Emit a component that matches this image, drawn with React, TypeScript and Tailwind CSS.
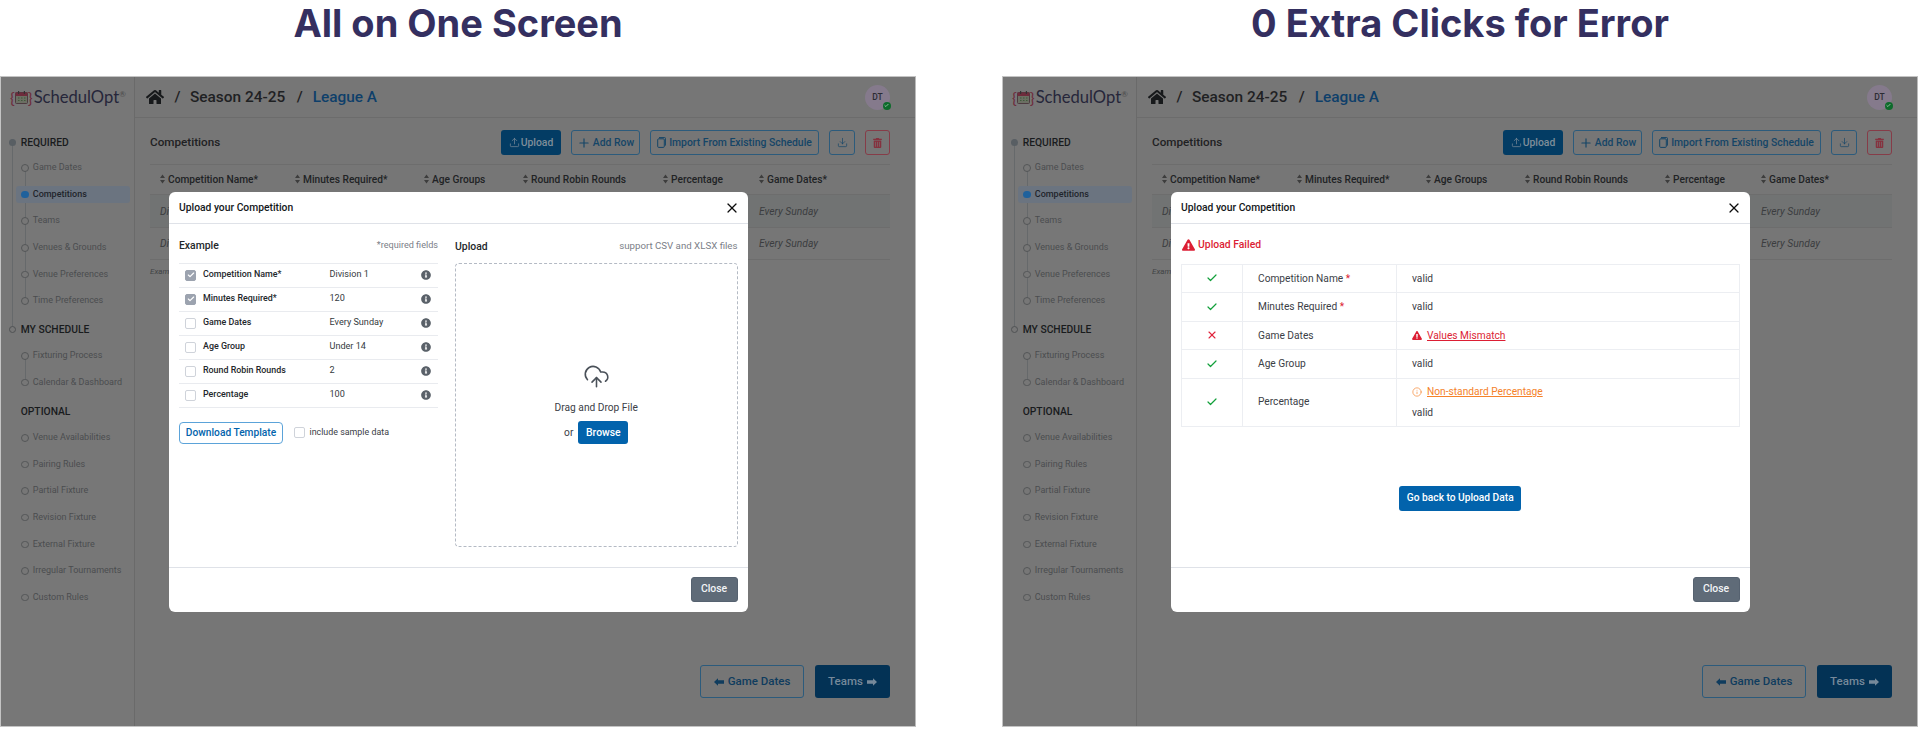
import React from "react";
import { FaHome, FaInfoCircle, FaTrashAlt, FaExclamationTriangle } from "react-icons/fa";
import { Upload, Download, Plus, X, Check, Info, CloudUpload } from "lucide-react";

const Sort = () => (
  <svg width="5" height="10" viewBox="0 0 5 10" className="shrink-0">
    <path d="M2.5 0.5 L5 4 H0 Z M2.5 9.5 L5 6 H0 Z" fill="#3d3d3d" />
  </svg>
);

const Arrow = ({ flip }: { flip?: boolean }) => (
  <svg width="10" height="8" viewBox="0 0 10 8" className={flip ? "rotate-180" : ""}>
    <path d="M0 4 L4 0.3 V2.3 H10 V5.7 H4 V7.7 Z" fill="currentColor" />
  </svg>
);

const Logo = () => (
  <div className="flex items-center h-full pl-[9px]">
    <span className="text-[16px] leading-none text-[#6e2c3c] font-['Lato',sans-serif]">{"{"}</span>
    <svg width="13" height="13" viewBox="0 0 13 13" className="shrink-0">
      <rect x="0.5" y="1.5" width="12" height="11" rx="1" fill="#6b6f63" stroke="#4d3a40" />
      <rect x="0.5" y="1.5" width="12" height="3.5" fill="#6e2c3c" />
      <rect x="3" y="0" width="1.2" height="3" fill="#333" />
      <rect x="8.8" y="0" width="1.2" height="3" fill="#333" />
      <path d="M3 7h1.5M6 7h1.5M9 7h1.5M3 9.5h1.5M6 9.5h1.5M9 9.5h1.5" stroke="#3f5a3a" strokeWidth="1" />
    </svg>
    <span className="text-[16px] leading-none text-[#6e2c3c] font-['Lato',sans-serif]">{"}"}</span>
    <span className="ml-[1px] text-[16.6px] leading-none text-[#26263a] font-['Lato',sans-serif]">SchedulOpt</span>
    <span className="text-[8px] leading-none text-[#4a4a4a] self-start mt-[13px] font-['Lato',sans-serif]">®</span>
  </div>
);

const NavItem = ({ label, active }: { label: string; active?: boolean }) => (
  <div className="relative h-[26.67px] flex items-center">
    {active && <div className="absolute left-[15.3px] right-[4px] top-[5px] h-[17px] rounded-[3px] bg-[#6b7480]" />}
    <span className={"relative z-10 ml-[20.25px] rounded-full " + (active ? "w-[7.5px] h-[7.5px] bg-[#1f619c]" : "w-[7.5px] h-[7.5px] border-[1.3px] border-[#545658] bg-[#777777]")} />
    <span className={"relative z-10 ml-[4px] text-[9px] " + (active ? "font-medium text-[#1f242b]" : "text-[#4b4d4f]")}>{label}</span>
  </div>
);

const SectionHead = ({ label, dot, className = "" }: { label: string; dot?: "solid" | "hollow"; className?: string }) => (
  <div className={"relative h-[24px] flex items-center pl-[19.7px] text-[10.3px] font-medium text-[#191b1d] " + className}>
    {dot === "solid" && <span className="absolute z-10 left-[7.5px] w-[7.5px] h-[7.5px] rounded-full bg-[#585e63]" />}
    {dot === "hollow" && <span className="absolute z-10 left-[7.5px] w-[7.5px] h-[7.5px] rounded-full border-[1.3px] border-[#505254] bg-[#777777]" />}
    {label}
  </div>
);

const NavList = ({ items, active, line }: { items: string[]; active?: string; line?: boolean }) => (
  <div className="relative">
    {line && <div className="absolute left-[23.5px] top-[13px] bottom-[13px] w-px bg-[#66696b]" />}
    {items.map((i) => (
      <NavItem key={i} label={i} active={i === active} />
    ))}
  </div>
);

const Sidebar = () => (
  <aside className="relative w-[134px] shrink-0 border-r border-[#6a6a6a] bg-[#777777]">
    <div className="h-[41px]">
      <Logo />
    </div>
    <div className="relative pt-[12.5px]">
      <div className="absolute left-[11px] top-[24px] h-[187px] w-px bg-[#66696b]" />
      <SectionHead label="REQUIRED" dot="solid" />
      <NavList line items={["Game Dates", "Competitions", "Teams", "Venues & Grounds", "Venue Preferences", "Time Preferences"]} active="Competitions" />
      <SectionHead label="MY SCHEDULE" dot="hollow" className="mt-[3px]" />
      <div className="mt-[1px]">
        <NavList line items={["Fixturing Process", "Calendar & Dashboard"]} />
      </div>
      <SectionHead label="OPTIONAL" className="mt-[3.7px]" />
      <div className="mt-[1px]">
        <NavList items={["Venue Availabilities", "Pairing Rules", "Partial Fixture", "Revision Fixture", "External Fixture", "Irregular Tournaments", "Custom Rules"]} />
      </div>
    </div>
  </aside>
);

const Header = () => (
  <header className="h-[41px] shrink-0 border-b-[1.5px] border-[#6c6c6c] flex items-center pl-[11px] pr-[25px] text-[15.4px] font-medium text-[#1f2123]">
    <FaHome className="w-[18px] h-[18px] text-[#17191b]" />
    <span className="ml-[10.5px] mt-[2px] w-[4px]">/</span>
    <span className="ml-[11.5px] mt-[2px]">Season 24-25</span>
    <span className="ml-[11.5px] mt-[2px] w-[4px]">/</span>
    <span className="ml-[12px] mt-[2px] text-[#0e3f6a]">League A</span>
    <div className="relative ml-auto w-[25px] h-[25px] rounded-full bg-[#857a8c] flex items-center justify-center text-[8.5px] font-medium text-[#2b2b33]">
      DT
      <span className="absolute right-[-0.5px] bottom-0 w-[8px] h-[8px] rounded-full bg-[#0d6b2b] flex items-center justify-center">
        <Check className="w-[5px] h-[5px] text-[#a9c9b3]" strokeWidth={4} />
      </span>
    </div>
  </header>
);

const OutlineBtn = ({ children, className = "" }: { children: React.ReactNode; className?: string }) => (
  <div className={"h-[25px] rounded-[3px] border-[1.2px] border-[#2c5b7c] flex items-center justify-center text-[10.4px] font-medium text-[#154567] " + className}>{children}</div>
);

const Toolbar = () => (
  <div className="h-[34px] flex items-center justify-between pb-[9px] pt-0">
    <span className="text-[11.7px] font-medium text-[#1f2123]">Competitions</span>
    <div className="flex gap-[10px]">
      <div className="w-[60px] h-[25px] rounded-[3px] bg-[#033c64] flex items-center justify-center gap-[1px] text-[10.4px] font-medium text-[#7f8e9a]">
        <Upload className="w-[11px] h-[11px]" strokeWidth={1.5} /> Upload
      </div>
      <OutlineBtn className="w-[69px] gap-[2px]">
        <Plus className="w-[14px] h-[14px]" strokeWidth={2} /> Add Row
      </OutlineBtn>
      <OutlineBtn className="w-[169px] gap-[3px]">
        <svg width="9" height="11" viewBox="0 0 9 11" fill="none" stroke="#154567" strokeWidth="1">
          <rect x="0.7" y="1.8" width="6.6" height="8.6" rx="1" />
          <path d="M2 0.6h5.6a1 1 0 0 1 1 1v7" />
        </svg>
        Import From Existing Schedule
      </OutlineBtn>
      <OutlineBtn className="w-[26px]">
        <Download className="w-[11px] h-[11px]" strokeWidth={1.5} />
      </OutlineBtn>
      <div className="w-[25px] h-[25px] rounded-[3px] border-[1.2px] border-[#863c48] flex items-center justify-center">
        <FaTrashAlt className="w-[9px] h-[10px] text-[#85323f]" />
      </div>
    </div>
  </div>
);

const columns = ["Competition Name*", "Minutes Required*", "Age Groups", "Round Robin Rounds", "Percentage", "Game Dates*"];
const gridCols = "grid grid-cols-[135px_129px_99px_140px_96px_1fr] pl-[10px]";

const BgTable = () => (
  <div className="text-[#2c2e30]">
    <div className={gridCols + " h-[31px] items-center border-y border-[#6d6d6d]"}>
      {columns.map((c) => (
        <div key={c} className="flex items-center gap-[3px] text-[10.2px] font-medium text-[#212325]">
          <Sort />
          {c}
        </div>
      ))}
    </div>
    {[0, 1].map((r) => (
      <div key={r} className={gridCols + " h-[32.5px] pt-[1px] items-center border-b border-[#6d6d6d] text-[10.3px] italic text-[#3b3d3f] " + (r === 0 ? "bg-[#717373]" : "")}>
        <span>Division {r + 1}</span>
        <span />
        <span />
        <span />
        <span />
        <span>Every Sunday</span>
      </div>
    ))}
    <div className="mt-[6px] text-[8px] italic text-[#414345]">Example</div>
  </div>
);

const BottomNav = () => (
  <div className="mt-auto flex justify-end gap-[11px] pb-[28px]">
    <div className="w-[104px] h-[33px] pt-[1px] rounded-[3px] border-[1.2px] border-[#2c5b7c] flex items-center justify-center gap-[4px] text-[11.5px] font-medium text-[#0f3c5e]">
      <Arrow /> Game Dates
    </div>
    <div className="w-[75px] h-[33px] pt-[1px] rounded-[3px] bg-[#033255] flex items-center justify-center gap-[4px] text-[11.5px] font-medium text-[#76899a]">
      Teams <Arrow flip />
    </div>
  </div>
);

const Modal = ({ children }: { children: React.ReactNode }) => (
  <div className="absolute left-[168px] top-[115px] w-[578.5px] h-[420px] rounded-[6px] bg-white flex flex-col overflow-hidden text-[#2e3338]">
    <div className="h-[32px] pt-[1px] shrink-0 border-b-[1.2px] border-[#dfe2e8] flex items-center justify-between pl-[10px] pr-[7.5px]">
      <span className="text-[10.3px] font-medium text-[#14171a]">Upload your Competition</span>
      <X className="w-[16px] h-[16px] text-[#0c0c0c]" strokeWidth={1.8} />
    </div>
    <div className="flex-1 min-h-0">{children}</div>
    <div className="h-[45.5px] shrink-0 border-t-[1.2px] border-[#dfe2e8] flex items-center justify-end pr-[10px] pb-[1px]">
      <div className="w-[47px] h-[25px] rounded-[3px] bg-[#5f6b78] border border-[#566270] flex items-center justify-center text-[10.4px] font-medium text-[#f2f4f6]">Close</div>
    </div>
  </div>
);

const Checkbox = ({ on }: { on?: boolean }) => (
  <span className={"w-[11px] h-[11px] shrink-0 rounded-[2px] flex items-center justify-center " + (on ? "bg-[#9ca3af] border border-[#9ca3af]" : "border border-[#cfd3da] bg-white")}>
    {on && <Check className="w-[8px] h-[8px] text-white" strokeWidth={3.5} />}
  </span>
);

const examples: [string, string, boolean][] = [
  ["Competition Name*", "Division 1", true],
  ["Minutes Required*", "120", true],
  ["Game Dates", "Every Sunday", false],
  ["Age Group", "Under 14", false],
  ["Round Robin Rounds", "2", false],
  ["Percentage", "100", false],
];

const UploadBody = () => (
  <div className="flex h-full pl-[10px] pr-[10px]">
    <div className="w-[259px] shrink-0">
      <div className="h-[38.5px] pt-[6px] flex items-center justify-between">
        <span className="text-[10.4px] font-medium text-[#23272b]">Example</span>
        <span className="text-[9.1px] text-[#7b8088]">*required fields</span>
      </div>
      <div className="border-t-[1.2px] border-[#e9ebef]">
        {examples.map(([l, v, on]) => (
          <div key={l} className="h-[24px] border-b-[1.2px] border-[#e9ebef] flex items-center pl-[6px] text-[8.9px]">
            <Checkbox on={on} />
            <span className="ml-[7px] w-[126.5px] font-medium text-[#23272b]">{l}</span>
            <span className="flex-1 text-[9.1px] text-[#343a40]">{v}</span>
            <FaInfoCircle className="w-[10px] h-[10px] mr-[7px] text-[#5a6169]" />
          </div>
        ))}
      </div>
      <div className="mt-[14px] flex items-center">
        <div className="w-[104px] h-[22.5px] rounded-[4px] border-[1.5px] border-[#5ba3d9] flex items-center justify-center text-[10.2px] font-medium text-[#0263ac]">Download Template</div>
        <span className="ml-[11px] w-[11px] h-[11px] rounded-[2px] border border-[#cfd3da]" />
        <span className="ml-[4.5px] text-[8.9px] text-[#3b4046]">include sample data</span>
      </div>
    </div>
    <div className="ml-[17px] flex-1 min-w-0">
      <div className="h-[39px] pt-[6px] flex items-center justify-between">
        <span className="text-[10.4px] font-medium text-[#23272b]">Upload</span>
        <span className="text-[9.7px] text-[#7b8088]">support CSV and XLSX files</span>
      </div>
      <div className="h-[284px] rounded-[4px] border-[1.3px] border-dashed border-[#b4bac4] flex flex-col items-center pt-[99px]">
        <CloudUpload className="w-[27px] h-[27px] text-[#4a5159]" strokeWidth={1.4} />
        <span className="mt-[10px] text-[10.2px] text-[#3b4046]">Drag and Drop File</span>
        <div className="mt-[6px] flex items-center gap-[5px]">
          <span className="text-[10.2px] text-[#3b4046]">or</span>
          <div className="w-[50px] h-[22.5px] rounded-[3px] bg-[#0263ac] flex items-center justify-center text-[10.4px] font-medium text-white">Browse</div>
        </div>
      </div>
    </div>
  </div>
);

const Yes = () => <Check className="w-[12px] h-[12px] mx-auto text-[#11a03a]" strokeWidth={2.4} />;
const No = () => <X className="w-[12px] h-[12px] mx-auto text-[#e0243c]" strokeWidth={2.2} />;
const Star = () => <span className="text-[#dc1e34]"> *</span>;

const cell = "border-[1.3px] border-[#eceef2] ";

const ResultRow = ({ icon, label, children, h }: { icon: React.ReactNode; label: React.ReactNode; children: React.ReactNode; h: string }) => (
  <tr className={h}>
    <td className={cell + "w-[61px]"}>{icon}</td>
    <td className={cell + "w-[154px] pl-[15px]"}>{label}</td>
    <td className={cell + "pl-[15px]"}>{children}</td>
  </tr>
);

const FailBody = () => (
  <div className="h-full px-[10px] flex flex-col">
    <div className="h-[39.5px] flex items-center gap-[3px] pl-[1px] pt-[2px] text-[10.4px] font-medium text-[#dc1e34]">
      <FaExclamationTriangle className="w-[13px] h-[12px]" />
      Upload Failed
    </div>
    <table className="w-full table-fixed border-collapse text-[10.2px] text-[#3b4046]">
      <tbody>
        <ResultRow h="h-[28.5px]" icon={<Yes />} label={<>Competition Name<Star /></>}>valid</ResultRow>
        <ResultRow h="h-[28.5px]" icon={<Yes />} label={<>Minutes Required<Star /></>}>valid</ResultRow>
        <ResultRow
          h="h-[28.5px]"
          icon={<No />}
          label="Game Dates"
        >
          <span className="flex items-center gap-[5px] text-[#dc1e34]">
            <FaExclamationTriangle className="w-[10px] h-[9px]" />
            <span className="underline">Values Mismatch</span>
          </span>
        </ResultRow>
        <ResultRow h="h-[28.5px]" icon={<Yes />} label="Age Group">valid</ResultRow>
        <ResultRow h="h-[48px]" icon={<Yes />} label="Percentage">
          <span className="flex items-center gap-[5px] text-[#f5822a]">
            <Info className="w-[10px] h-[10px]" strokeWidth={1.6} />
            <span className="underline">Non-standard Percentage</span>
          </span>
          <span className="block mt-[5px]">valid</span>
        </ResultRow>
      </tbody>
    </table>
    <div className="mt-[59px] flex justify-center">
      <div className="w-[122px] h-[25px] rounded-[3px] bg-[#0263ac] flex items-center justify-center text-[10.2px] font-medium text-white">Go back to Upload Data</div>
    </div>
  </div>
);

const Panel = ({ title, children }: { title: string; children: React.ReactNode }) => (
  <section className="w-[916px] shrink-0 flex flex-col">
    <h1 className="h-[76px] text-center text-[38px] leading-[46px] font-bold text-[#342f60] font-['Inter',sans-serif]">{title}</h1>
    <div className="relative h-[651px] flex border border-[#c4c4c4] border-r-[#bbbbbb] bg-[#767676] font-['Roboto',sans-serif]">
      <Sidebar />
      <main className="flex-1 min-w-0 flex flex-col">
        <Header />
        <div className="flex-1 flex flex-col pl-[15px] pr-[25px] pt-[12px]">
          <Toolbar />
          <BgTable />
          <BottomNav />
        </div>
      </main>
      <Modal>{children}</Modal>
    </div>
  </section>
);

export default function App() {
  return (
    <div className="w-[1920px] h-[729px] bg-white flex gap-[86px] overflow-hidden">
      <Panel title="All on One Screen">
        <UploadBody />
      </Panel>
      <Panel title="0 Extra Clicks for Error">
        <FailBody />
      </Panel>
    </div>
  );
}
